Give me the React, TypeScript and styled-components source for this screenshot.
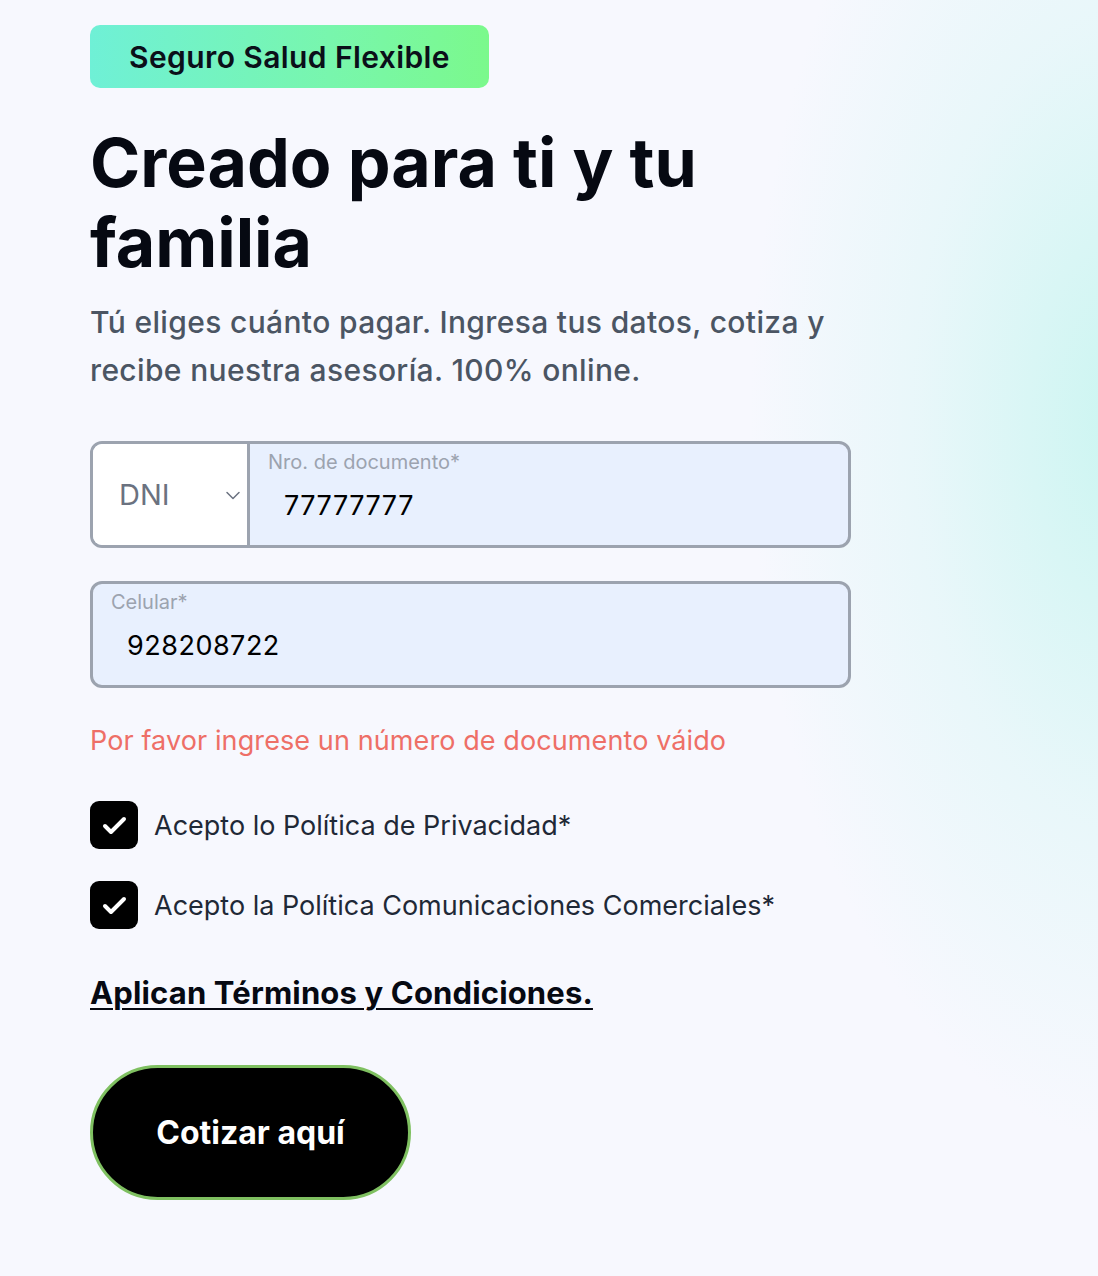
import React, { useState } from 'react';
import styled, { createGlobalStyle } from 'styled-components';

const GlobalStyle = createGlobalStyle`
  html, body {
    margin: 0;
    padding: 0;
  }
  body {
    font-family: Inter, "Noto Sans", "Liberation Sans", sans-serif;
    background-color: #f7f8fe;
  }
`;

const Page = styled.div`
  min-height: 1276px;
  box-sizing: border-box;
  padding: 25px 0 0 90px;
  background:
    radial-gradient(ellipse 380px 720px at 1130px 420px, rgba(200, 245, 240, 0.95), rgba(220, 246, 246, 0.55) 55%, rgba(247, 248, 254, 0) 100%),
    #f7f8fe;
`;

const Content = styled.div`
  width: 761px;
  display: flex;
  flex-direction: column;
`;

const Badge = styled.div`
  align-self: flex-start;
  width: 399px;
  height: 63px;
  box-sizing: border-box;
  display: flex;
  align-items: center;
  justify-content: center;
  border-radius: 10px;
  background: linear-gradient(90deg, #6ff0d6 0%, #78f6ad 60%, #7bf98c 100%);
  color: #0b0f19;
  font-size: 30px;
  font-weight: 600;
  letter-spacing: 0.4px;
`;

const Title = styled.h1`
  margin: 34px 0 0;
  font-size: 68px;
  line-height: 80px;
  font-weight: 700;
  letter-spacing: 0;
  color: #060912;
  width: 660px;
`;

const Subtitle = styled.p`
  margin: 16px 0 0;
  font-size: 30px;
  line-height: 48px;
  font-weight: 500;
  color: #4b5563;
  letter-spacing: 0.35px;
`;

const FieldGroup = styled.div<{ $top: number }>`
  margin-top: ${p => p.$top}px;
  height: 107px;
  box-sizing: border-box;
  display: flex;
  border: 3px solid #9ca3af;
  border-radius: 12px;
  overflow: hidden;
  background: #e8f0fe;
`;

const SelectBox = styled.div`
  width: 157px;
  flex-shrink: 0;
  display: flex;
  align-items: center;
  justify-content: space-between;
  padding: 0 4px 0 26px;
  box-sizing: border-box;
  background: #ffffff;
  border-right: 3px solid #9ca3af;
  color: #6b7280;
  font-size: 29px;
`;

const InputArea = styled.label<{ $padLeft: number }>`
  flex: 1;
  display: flex;
  flex-direction: column;
  padding: 6px 0 0 ${p => p.$padLeft}px;
  box-sizing: border-box;
`;

const FloatLabel = styled.span`
  font-size: 20px;
  line-height: 24px;
  color: #9ca3af;
  margin-left: -16px;
`;

const Input = styled.input`
  margin-top: 14px;
  border: none;
  outline: none;
  background: transparent;
  font-family: Inter, "Noto Sans", "Liberation Sans", sans-serif;
  font-size: 27px;
  line-height: 36px;
  color: #000000;
  padding: 0;
  letter-spacing: 0.5px;
`;

const ErrorText = styled.p`
  margin: 36px 0 0;
  font-size: 27px;
  line-height: 34px;
  color: #ee6f67;
  letter-spacing: 0.1px;
`;

const CheckRow = styled.label<{ $top: number }>`
  margin-top: ${p => p.$top}px;
  display: flex;
  align-items: center;
  gap: 16px;
  font-size: 27px;
  color: #1f2937;
  cursor: pointer;
`;

const CheckBox = styled.span`
  width: 48px;
  height: 48px;
  border-radius: 9px;
  background: #000000;
  display: flex;
  align-items: center;
  justify-content: center;
  flex-shrink: 0;
`;

const TermsLink = styled.a`
  margin-top: 44px;
  align-self: flex-start;
  font-size: 31px;
  line-height: 40px;
  font-weight: 700;
  color: #060912;
  text-decoration: underline;
  text-underline-offset: 4px;
  text-decoration-thickness: 2px;
  letter-spacing: 0.15px;
`;

const SubmitButton = styled.button`
  margin-top: 52px;
  align-self: flex-start;
  width: 321px;
  height: 135px;
  border-radius: 68px;
  border: 3px solid #7fc061;
  background: #000000;
  color: #ffffff;
  font-family: Inter, "Noto Sans", "Liberation Sans", sans-serif;
  font-size: 32px;
  font-weight: 700;
  letter-spacing: 0;
  cursor: pointer;
`;

const Chevron = () => (
  <svg width="20" height="20" viewBox="0 0 20 20" fill="none">
    <path d="M4 7.5l6 6 6-6" stroke="#6b7280" strokeWidth="1.5" strokeLinecap="round" strokeLinejoin="round" />
  </svg>
);

const Check = () => (
  <svg width="32" height="32" viewBox="0 0 32 32" fill="none">
    <path d="M7 17l6 6L26 10" stroke="#ffffff" strokeWidth="4" strokeLinecap="round" strokeLinejoin="round" />
  </svg>
);

const App: React.FC = () => {
  const [doc, setDoc] = useState('77777777');
  const [phone, setPhone] = useState('928208722');

  return (
    <>
      <GlobalStyle />
      <Page>
        <Content>
          <Badge>Seguro Salud Flexible</Badge>
          <Title>Creado para ti y tu familia</Title>
          <Subtitle>
            Tú eliges cuánto pagar. Ingresa tus datos, cotiza y recibe nuestra asesoría. 100% online.
          </Subtitle>

          <FieldGroup $top={47}>
            <SelectBox>
              DNI
              <Chevron />
            </SelectBox>
            <InputArea $padLeft={34}>
              <FloatLabel>Nro. de documento*</FloatLabel>
              <Input value={doc} onChange={e => setDoc(e.target.value)} />
            </InputArea>
          </FieldGroup>

          <FieldGroup $top={33}>
            <InputArea $padLeft={34}>
              <FloatLabel>Celular*</FloatLabel>
              <Input value={phone} onChange={e => setPhone(e.target.value)} />
            </InputArea>
          </FieldGroup>

          <ErrorText>Por favor ingrese un número de documento váido</ErrorText>

          <CheckRow $top={43}>
            <CheckBox>
              <Check />
            </CheckBox>
            Acepto lo Política de Privacidad*
          </CheckRow>
          <CheckRow $top={32}>
            <CheckBox>
              <Check />
            </CheckBox>
            Acepto la Política Comunicaciones Comerciales*
          </CheckRow>

          <TermsLink href="#">Aplican Términos y Condiciones.</TermsLink>

          <SubmitButton>Cotizar aquí</SubmitButton>
        </Content>
      </Page>
    </>
  );
};

export default App;
